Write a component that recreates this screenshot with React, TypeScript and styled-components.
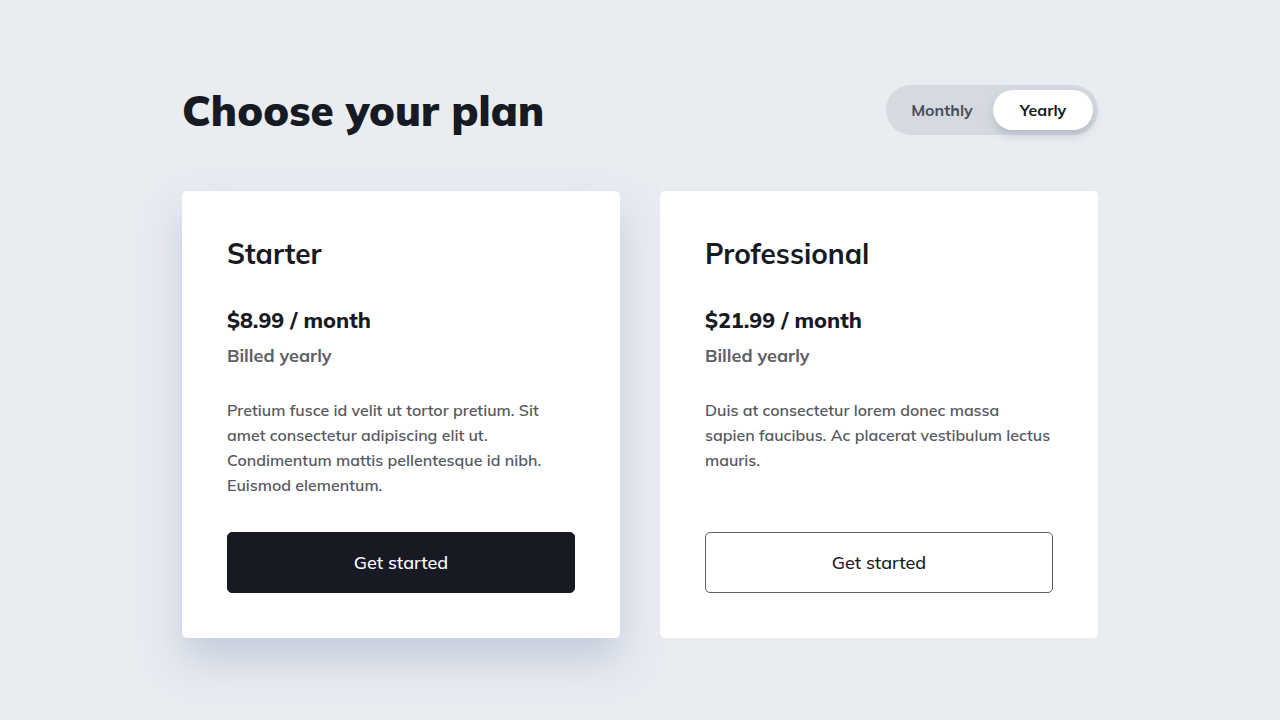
import React, { useState } from "react";
import styled, { createGlobalStyle, css } from "styled-components";

const Global = createGlobalStyle`
  html, body { margin: 0; padding: 0; background: #e9edf2; }
  body { font-family: "Mulish", Lato, "Noto Sans", sans-serif; color: #171a23; }
  * { box-sizing: border-box; }
`;

const Page = styled.div`
  width: 916px;
  min-height: 720px;
  margin: 0 auto;
  padding: 85px 0 80px;
`;

const Header = styled.header`
  display: flex;
  align-items: center;
  justify-content: space-between;
  height: 50px;
`;

const Title = styled.h1`
  margin: 0;
  font-size: 42px;
  font-weight: 900;
  letter-spacing: 0.1px;
  color: #161a23;
`;

const Toggle = styled.div`
  display: flex;
  align-items: center;
  height: 50px;
  width: 212px;
  padding: 5px;
  border-radius: 25px;
  background: #d5dae1;
`;

const ToggleOption = styled.button<{ $active?: boolean }>`
  border: none;
  height: 40px;
  border-radius: 20px;
  font-family: inherit;
  font-size: 16px;
  font-weight: 700;
  cursor: pointer;
  background: transparent;
  color: #4b4e58;
  flex: 0 0 102px;
  ${(p) =>
    p.$active &&
    css`
      flex: 0 0 100px;
      margin-left: auto;
      background: #ffffff;
      color: #171a23;
      box-shadow: 0 5px 10px rgba(140, 150, 170, 0.45);
    `}
`;

const Grid = styled.div`
  display: grid;
  grid-template-columns: 1fr 1fr;
  gap: 40px;
  margin-top: 56px;
`;

const Card = styled.div<{ $featured?: boolean }>`
  display: flex;
  flex-direction: column;
  background: #ffffff;
  border-radius: 5px;
  padding: 45px;
  height: 447px;
  ${(p) =>
    p.$featured &&
    css`
      box-shadow: 0 22px 40px rgba(160, 170, 195, 0.5);
    `}
`;

const PlanName = styled.h2`
  margin: 0;
  font-size: 28px;
  line-height: 36px;
  font-weight: 700;
  color: #171a23;
`;

const Price = styled.div`
  margin-top: 34px;
  font-size: 21.5px;
  line-height: 28px;
  font-weight: 800;
  color: #171a23;
`;

const Billed = styled.div`
  margin-top: 10px;
  font-size: 18px;
  line-height: 24px;
  font-weight: 700;
  color: #5e5f67;
`;

const Desc = styled.p`
  margin: 30px 0 0;
  font-size: 16px;
  line-height: 25px;
  font-weight: 600;
  color: #57585f;
`;

const Button = styled.button<{ $variant: "solid" | "outline" }>`
  flex: 0 0 61px;
  height: 61px;
  width: 100%;
  border-radius: 5px;
  font-family: inherit;
  font-size: 18px;
  font-weight: 500;
  cursor: pointer;
  ${(p) =>
    p.$variant === "solid"
      ? css`
          background: #171a23;
          color: #ffffff;
          border: 1px solid #171a23;
        `
      : css`
          background: #ffffff;
          color: #171a23;
          border: 1px solid #5e5f67;
        `}
`;

const ButtonSpacer = styled.div`
  flex: 1;
  min-height: 24px;
`;

const plans = [
  {
    name: "Starter",
    price: "$8.99 / month",
    desc: "Pretium fusce id velit ut tortor pretium. Sit amet consectetur adipiscing elit ut. Condimentum mattis pellentesque id nibh. Euismod elementum.",
    featured: true,
  },
  {
    name: "Professional",
    price: "$21.99 / month",
    desc: "Duis at consectetur lorem donec massa sapien faucibus. Ac placerat vestibulum lectus mauris.",
    featured: false,
  },
];

export default function App() {
  const [yearly, setYearly] = useState(true);
  return (
    <>
      <Global />
      <Page>
        <Header>
          <Title>Choose your plan</Title>
          <Toggle>
            <ToggleOption $active={!yearly} onClick={() => setYearly(false)}>
              Monthly
            </ToggleOption>
            <ToggleOption $active={yearly} onClick={() => setYearly(true)}>
              Yearly
            </ToggleOption>
          </Toggle>
        </Header>
        <Grid>
          {plans.map((p) => (
            <Card key={p.name} $featured={p.featured}>
              <PlanName>{p.name}</PlanName>
              <Price>{p.price}</Price>
              <Billed>Billed yearly</Billed>
              <Desc>{p.desc}</Desc>
              <ButtonSpacer />
              <Button $variant={p.featured ? "solid" : "outline"}>Get started</Button>
            </Card>
          ))}
        </Grid>
      </Page>
    </>
  );
}
